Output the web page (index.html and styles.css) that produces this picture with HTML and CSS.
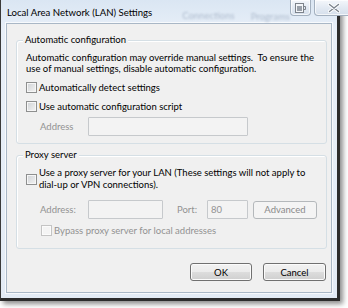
FILE: index.html
```html
<!DOCTYPE html>
<html>
<head>
<meta charset="utf-8">
<link rel="stylesheet" href="styles.css">
</head>
<body>
<div class="window">
  <div class="titlebar">
    <span class="title">Local Area Network (LAN) Settings</span>
    <span class="ghost g1">Connections</span>
    <span class="ghost g2">Programs</span>
    <div class="caption">
      <span class="cap-btn restore">
        <svg width="11" height="10" viewBox="0 0 11 10"><rect x="0.5" y="0.5" width="8" height="9" fill="#f4f6f9" stroke="#7d838b"/><rect x="2" y="3" width="5" height="5" fill="#9aa1aa"/><path d="M8.5 3.5h2v3h-2" fill="none" stroke="#7d838b"/></svg>
      </span>
      <span class="cap-btn close">
        <svg width="12" height="10" viewBox="0 0 12 10"><path d="M1.5 1.5l9 7M10.5 1.5l-9 7" stroke="#fff" stroke-width="3.2" stroke-linecap="round"/><path d="M1.5 1.5l9 7M10.5 1.5l-9 7" stroke="#7c848e" stroke-width="1.4" stroke-linecap="round"/></svg>
      </span>
    </div>
  </div>
  <div class="client">
    <div class="group auto">
      <div class="legend">Automatic configuration</div>
      <p class="desc">Automatic configuration may override manual settings.&nbsp; To ensure the<br>use of manual settings, disable automatic configuration.</p>
      <div class="check-row first"><span class="cb"></span><span>Automatically detect settings</span></div>
      <div class="check-row second"><span class="cb"></span><span>Use automatic configuration script</span></div>
      <div class="field-row script-addr">
        <span class="lbl disabled addr-lbl">Address</span>
        <span class="input wide"></span>
      </div>
    </div>
    <div class="group proxy">
      <div class="legend">Proxy server</div>
      <div class="check-row multi"><span class="cb"></span><span>Use a proxy server for your LAN (These settings will not apply to<br>dial-up or VPN connections).</span></div>
      <div class="field-row proxy-addr">
        <span class="lbl disabled addr-lbl">Address:</span>
        <span class="input addr"></span>
        <span class="lbl disabled port-lbl">Port:</span>
        <span class="input port">80</span>
        <span class="btn disabled-btn advanced">Advanced</span>
      </div>
      <div class="check-row bypass"><span class="cb cb-disabled"></span><span class="disabled">Bypass proxy server for local addresses</span></div>
    </div>
    <div class="actions">
      <span class="btn ok">OK</span>
      <span class="btn cancel">Cancel</span>
    </div>
  </div>
</div>
</body>
</html>
```

FILE: styles.css
```css
html, body {
  margin: 0;
  padding: 0;
  background: #ffffff;
}
body {
  width: 348px;
  height: 308px;
  overflow: hidden;
  font-family: "Lato", "Noto Sans", sans-serif;
  font-size: 9.5px;
  color: #000000;
}
.window {
  box-sizing: border-box;
  width: 340px;
  height: 301px;
  display: flex;
  flex-direction: column;
  background: linear-gradient(#dae6f3, #e8eff8 30px, #e3ebf5);
  border-left: 1px solid #3a3a3a;
  border-right: 3px solid #2c2c2c;
  border-bottom: 3px solid #2c2c2c;
  box-shadow: 3px 3px 5px rgba(0, 0, 0, 0.45);
}
.titlebar {
  height: 23px;
  display: flex;
  align-items: flex-start;
}
.title {
  margin-left: 6px;
  margin-top: 6px;
  line-height: 14px;
  font-size: 9.6px;
  color: #000;
  white-space: nowrap;
}
.ghost {
  margin-top: 10px;
  line-height: 12px;
  font-size: 9.5px;
  color: #6c7f99;
  filter: blur(1.3px);
  opacity: 0.45;
  white-space: nowrap;
}
.g1 { margin-left: 30px; }
.g2 { margin-left: 16px; margin-top: 11px; }
.caption {
  margin-left: auto;
  margin-right: 1px;
  display: flex;
  gap: 3px;
}
.cap-btn {
  box-sizing: border-box;
  height: 16px;
  display: flex;
  align-items: center;
  justify-content: center;
  border: 1px solid #a3b0bf;
  border-top: none;
  border-radius: 0 0 4px 4px;
  background: linear-gradient(#f4f7fb, #e3eaf3 50%, #d5dfeb);
  box-shadow: inset 0 0 0 1px rgba(255, 255, 255, 0.7);
}
.restore { width: 21px; }
.close { width: 41px; }
.client {
  box-sizing: border-box;
  flex: 1;
  margin: 0 5px 5px 5px;
  background: #f0f0f0;
  border: 1px solid #a9b7c6;
  box-shadow: 0 0 0 1px rgba(255, 255, 255, 0.7);
  padding: 16px 4px 0 9px;
}
.group {
  border: 1px solid #d5dfe5;
  border-radius: 3px;
  box-shadow: inset 1px 1px 0 #ffffff;
  padding: 0 4px 0 9px;
}
.auto { padding-bottom: 7px; }
.proxy { margin-top: 11px; padding-bottom: 11px; }
.legend {
  width: fit-content;
  margin: -7px 0 0 -3px;
  padding: 0 2px;
  line-height: 12px;
  background: #f0f0f0;
  white-space: nowrap;
}
.desc {
  margin: 6px 0 0 0;
  line-height: 11px;
  white-space: nowrap;
}
.check-row {
  display: flex;
  align-items: center;
  gap: 2px;
  height: 14px;
  white-space: nowrap;
}
.check-row.first { margin-top: 6px; }
.check-row.second { margin-top: 5px; }
.check-row.multi {
  height: auto;
  margin-top: 6px;
  line-height: 12px;
}
.check-row.bypass {
  margin-top: 4px;
  margin-left: 15px;
}
.cb {
  box-sizing: border-box;
  flex: none;
  width: 11px;
  height: 11px;
  border: 1px solid #8e8f8f;
  background: linear-gradient(135deg, #cfd2d5, #f3f3f3);
  box-shadow: inset 0 0 0 1px #f6f6f6;
}
.cb-disabled {
  border-color: #c4c4c4;
  background: #f4f4f4;
  box-shadow: inset 0 0 0 1px #fbfbfb;
}
.disabled { color: #929292; }
.field-row {
  display: flex;
  align-items: center;
  margin-left: 14px;
  height: 19px;
  white-space: nowrap;
}
.script-addr { margin-top: 4px; }
.proxy-addr { margin-top: 9px; }
.addr-lbl { width: 48px; }
.port-lbl { width: 30px; margin-left: 14px; }
.input {
  box-sizing: border-box;
  height: 19px;
  border: 1px solid #c6c9cc;
  border-radius: 1px;
  background: #f3f3f3;
  color: #929292;
  line-height: 17px;
  padding-left: 3px;
}
.wide { width: 160px; }
.addr { width: 75px; }
.port { width: 41px; }
.btn {
  box-sizing: border-box;
  height: 18px;
  display: flex;
  align-items: center;
  justify-content: center;
  border: 1px solid #707070;
  border-radius: 3px;
  background: linear-gradient(#f2f2f2, #ebebeb 50%, #dddddd 50%, #cfcfcf);
  box-shadow: inset 0 0 0 1px #fbfbfb;
  color: #000;
}
.disabled-btn {
  border-color: #b4b8bb;
  background: #f4f4f4;
  color: #8a8a8a;
  box-shadow: none;
}
.advanced { width: 64px; margin-left: 5px; }
.actions {
  display: flex;
  justify-content: flex-end;
  gap: 11px;
  margin: 14px 1px 0 0;
}
.ok { width: 62px; }
.cancel { width: 63px; }
```
